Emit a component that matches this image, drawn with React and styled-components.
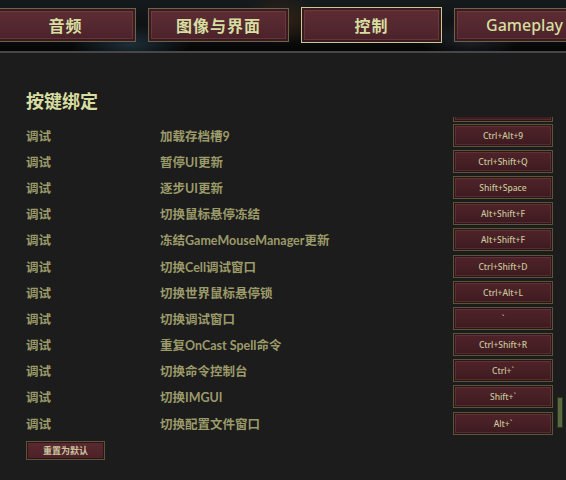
import React from 'react'
import styled, { createGlobalStyle } from 'styled-components'

const Global = createGlobalStyle`
  html, body {
    margin: 0;
    padding: 0;
    background: #1c1c1c;
    overflow: hidden;
  }
  body {
    font-family: "Noto Sans", "Noto Sans CJK SC", sans-serif;
  }
`

const Screen = styled.div`
  width: 566px;
  height: 480px;
  position: relative;
  overflow: hidden;
  background: #1c1c1c;
`

const TopBar = styled.div`
  height: 51px;
  background:
    radial-gradient(ellipse 60px 20px at 130px 45px, rgba(50, 80, 100, 0.5), transparent),
    radial-gradient(ellipse 40px 25px at 280px 20px, rgba(90, 50, 20, 0.5), transparent),
    radial-gradient(ellipse 50px 20px at 470px 40px, rgba(60, 70, 80, 0.4), transparent),
    linear-gradient(180deg, #151a1c 0%, #0c0f10 70%, #050505 100%);
  border-bottom: 2px solid #474747;
`

const Tabs = styled.div`
  display: flex;
  gap: 12px;
  margin-left: -5px;
  padding-top: 8px;
  align-items: flex-start;
`

const Tab = styled.div`
  flex: 0 0 141px;
  box-sizing: border-box;
  display: flex;
  align-items: center;
  justify-content: center;
  font-size: 16px;
  font-weight: ${p => (p.$latin ? 500 : 700)};
  color: #d6dea0;
  background: linear-gradient(180deg, #5e2c33 0%, #552830 50%, #4a2129 100%);
  border: 1px solid ${p => (p.$active ? '#c9c88e' : '#6a6449')};
  box-shadow: inset 0 0 0 2px #3a1a1e, inset 0 0 0 3px rgba(140, 90, 90, 0.35);
  margin-top: ${p => (p.$active ? '-1px' : '0')};
  height: ${p => (p.$active ? '36px' : '34px')};
  letter-spacing: ${p => (p.$latin ? '0' : '1px')};
`

const Panel = styled.div`
  padding: 36px 0 0 26px;
`

const Heading = styled.div`
  font-size: 18px;
  font-weight: 700;
  color: #d7dca0;
  line-height: 24px;
  height: 24px;
`

const List = styled.div`
  margin-top: 4px;
`

const Row = styled.div`
  display: grid;
  grid-template-columns: 134px 293px 100px;
  align-items: center;
  height: 26.2px;
  font-family: Lato, "Noto Sans CJK SC", sans-serif;
  font-size: 12.5px;
  font-weight: 700;
  color: #9b9a69;
`

const Stub = styled.div`
  margin-left: 427px;
  width: 100px;
  height: 5px;
  overflow: hidden;
  display: flex;
  flex-direction: column;
  justify-content: flex-end;
`

const KeyButton = styled.div`
  width: 100px;
  height: 23px;
  flex: none;
  box-sizing: border-box;
  display: flex;
  align-items: center;
  justify-content: center;
  font-family: "Noto Sans", sans-serif;
  font-size: 8.5px;
  font-weight: 500;
  color: #c9c79b;
  background: linear-gradient(180deg, #4f2329 0%, #461f25 55%, #3c1a1f 100%);
  border: 1px solid #58573a;
  box-shadow: inset 0 0 0 1px #2c1417, inset 0 0 0 2px rgba(130, 80, 80, 0.35);
`

const ResetButton = styled.div`
  margin-top: 5px;
  width: 79px;
  height: 19px;
  box-sizing: border-box;
  display: flex;
  align-items: center;
  justify-content: center;
  font-size: 9px;
  font-weight: 700;
  color: #cbc39e;
  background: linear-gradient(180deg, #5a2a30 0%, #4a2127 100%);
  border: 1px solid #5a5538;
  box-shadow: inset 0 0 0 1px #2c1417;
`

const ScrollThumb = styled.div`
  position: absolute;
  left: 557px;
  top: 397px;
  width: 6px;
  height: 31px;
  box-sizing: border-box;
  background: #5b6a3e;
  border: 1px solid #2e3522;
`

const bindings = [
  ['加载存档槽9', 'Ctrl+Alt+9'],
  ['暂停UI更新', 'Ctrl+Shift+Q'],
  ['逐步UI更新', 'Shift+Space'],
  ['切换鼠标悬停冻结', 'Alt+Shift+F'],
  ['冻结GameMouseManager更新', 'Alt+Shift+F'],
  ['切换Cell调试窗口', 'Ctrl+Shift+D'],
  ['切换世界鼠标悬停锁', 'Ctrl+Alt+L'],
  ['切换调试窗口', '`'],
  ['重复OnCast Spell命令', 'Ctrl+Shift+R'],
  ['切换命令控制台', 'Ctrl+`'],
  ['切换IMGUI', 'Shift+`'],
  ['切换配置文件窗口', 'Alt+`'],
]

export default function App() {
  return (
    <Screen>
      <Global />
      <TopBar>
        <Tabs>
          <Tab>音频</Tab>
          <Tab>图像与界面</Tab>
          <Tab $active>控制</Tab>
          <Tab $latin>Gameplay</Tab>
        </Tabs>
      </TopBar>
      <Panel>
        <Heading>按键绑定</Heading>
        <List>
          <Stub><KeyButton /></Stub>
          {bindings.map(([action, key], i) => (
            <Row key={i}>
              <span>调试</span>
              <span>{action}</span>
              <KeyButton>{key}</KeyButton>
            </Row>
          ))}
        </List>
        <ResetButton>重置为默认</ResetButton>
      </Panel>
      <ScrollThumb />
    </Screen>
  )
}
